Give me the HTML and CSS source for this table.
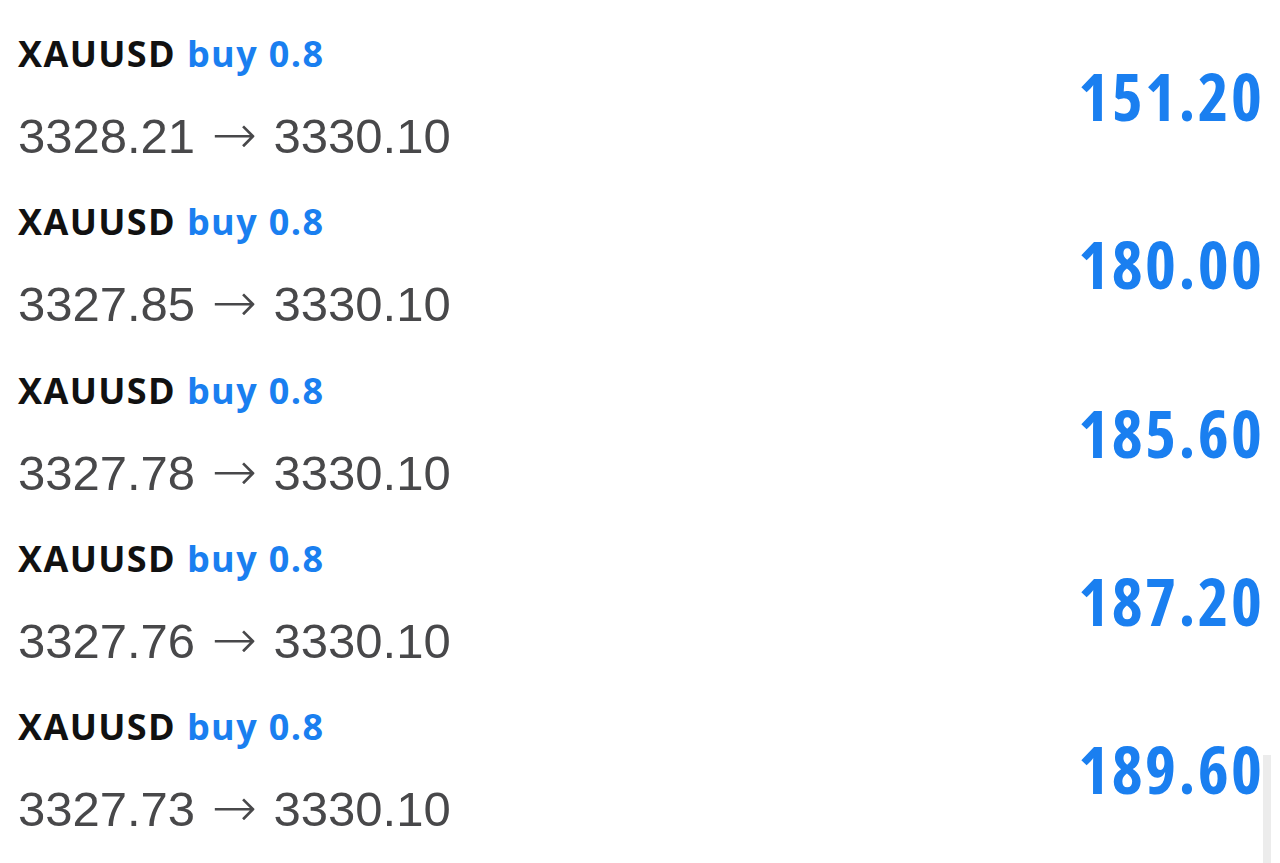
FILE: index.html
```html
<!DOCTYPE html>
<html lang="en">
  <head>
    <meta charset="UTF-8" />
    <meta name="viewport" content="width=device-width, initial-scale=1.0" />
    <title>Closed positions</title>
    <link rel="stylesheet" href="styles.css">
  </head>
  <body>
    <div class="deal-list">
      <div class="deal">
        <div class="deal-info">
          <p class="deal-title">XAUUSD <span class="deal-side">buy 0.8</span></p>
          <p class="deal-prices">3328.21 <span class="arrow">→</span> 3330.10</p>
        </div>
        <p class="deal-profit">151.20</p>
      </div>
      <div class="deal">
        <div class="deal-info">
          <p class="deal-title">XAUUSD <span class="deal-side">buy 0.8</span></p>
          <p class="deal-prices">3327.85 <span class="arrow">→</span> 3330.10</p>
        </div>
        <p class="deal-profit">180.00</p>
      </div>
      <div class="deal">
        <div class="deal-info">
          <p class="deal-title">XAUUSD <span class="deal-side">buy 0.8</span></p>
          <p class="deal-prices">3327.78 <span class="arrow">→</span> 3330.10</p>
        </div>
        <p class="deal-profit">185.60</p>
      </div>
      <div class="deal">
        <div class="deal-info">
          <p class="deal-title">XAUUSD <span class="deal-side">buy 0.8</span></p>
          <p class="deal-prices">3327.76 <span class="arrow">→</span> 3330.10</p>
        </div>
        <p class="deal-profit">187.20</p>
      </div>
      <div class="deal">
        <div class="deal-info">
          <p class="deal-title">XAUUSD <span class="deal-side">buy 0.8</span></p>
          <p class="deal-prices">3327.73 <span class="arrow">→</span> 3330.10</p>
        </div>
        <p class="deal-profit">189.60</p>
      </div>
    </div>

    <div class="scroll-track"></div>
  </body>
</html>
```

FILE: styles.css
```css
* {
  padding: 0;
  margin: 0;
}

body {
  background-color: #ffffff;
  font-family: "Liberation Sans", Arial, sans-serif;
  overflow: hidden;
}

.deal-list {
  display: flex;
  flex-direction: column;
}

.deal {
  height: 168.25px;
  box-sizing: border-box;
  padding: 34px 18px 0 18px;
  display: flex;
  justify-content: space-between;
  align-items: flex-start;
}

.deal-title {
  font-family: "Open Sans", sans-serif;
  font-weight: 700;
  font-size: 36px;
  line-height: 40px;
  letter-spacing: 1.4px;
  color: #111111;
}

.deal-side {
  color: #1a7ff0;
}

.deal-prices {
  margin-top: 33px;
  font-family: "Liberation Sans", Arial, sans-serif;
  font-size: 49px;
  line-height: 56px;
  color: #48484a;
}

.arrow {
  margin: 0 3px;
  font-family: "DejaVu Sans", sans-serif;
  font-weight: 200;
  font-size: 54px;
}

.deal-profit {
  margin-top: 27px;
  margin-right: -2.4px;
  font-family: "Open Sans", sans-serif;
  font-stretch: 75%;
  font-weight: 700;
  font-size: 66px;
  line-height: 68px;
  letter-spacing: 2.4px;
  color: #1a7ff0;
}

.scroll-track {
  position: fixed;
  left: 1263px;
  top: 755px;
  bottom: 0;
  width: 8px;
  background-color: #ececec;
}
```
